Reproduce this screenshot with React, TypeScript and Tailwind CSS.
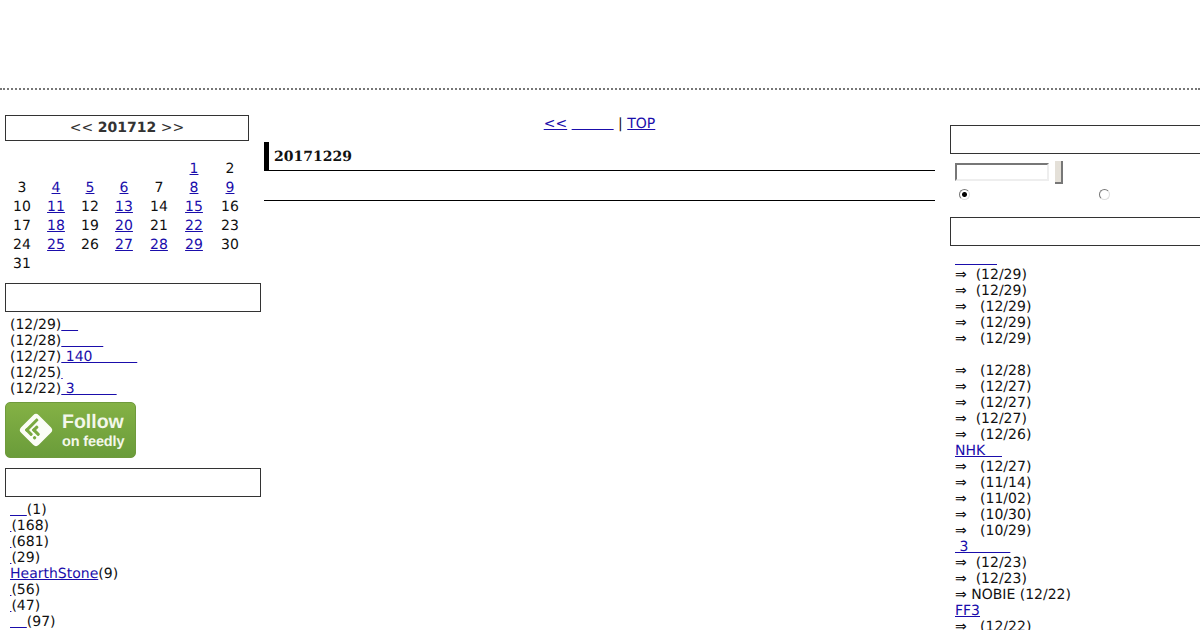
const HAIR = "\u200a";
const EM = "\u2003";
const THIN = "\u2009";
const SP = "\u00a0";

const linkCls = "text-[#1a0dab] underline";

const calendar: { day: number | null; link: boolean }[][] = [
  [null, null, null, null, null, 1, 2],
  [3, 4, 5, 6, 7, 8, 9],
  [10, 11, 12, 13, 14, 15, 16],
  [17, 18, 19, 20, 21, 22, 23],
  [24, 25, 26, 27, 28, 29, 30],
  [31, null, null, null, null, null, null],
].map((row) =>
  row.map((day) => ({
    day,
    link: day !== null && [1, 4, 5, 6, 8, 9, 11, 13, 15, 18, 20, 22, 25, 27, 28, 29].includes(day),
  })),
);

const recent = [
  { date: "(12/29)", title: EM + THIN },
  { date: "(12/28)", title: EM + EM + EM },
  { date: "(12/27)", title: SP + "140" + EM + EM + EM + THIN },
  { date: "(12/25)", title: HAIR },
  { date: "(12/22)", title: SP + "3" + EM + EM + EM },
];

const categories = [
  { name: EM + THIN, count: "(1)" },
  { name: HAIR, count: "(168)" },
  { name: HAIR, count: "(681)" },
  { name: HAIR, count: "(29)" },
  { name: "HearthStone", count: "(9)" },
  { name: HAIR, count: "(56)" },
  { name: HAIR, count: "(47)" },
  { name: EM + THIN, count: "(97)" },
];

type Row = { link?: string; text?: string };
const entry = (spaces: number, date: string): Row => ({
  text: "⇒" + SP.repeat(spaces) + date,
});

const comments: Row[] = [
  { link: EM + EM + EM },
  entry(2, "(12/29)"),
  entry(2, "(12/29)"),
  entry(3, "(12/29)"),
  entry(3, "(12/29)"),
  entry(3, "(12/29)"),
  { text: SP },
  entry(3, "(12/28)"),
  entry(3, "(12/27)"),
  entry(3, "(12/27)"),
  entry(2, "(12/27)"),
  entry(3, "(12/26)"),
  { link: "NHK" + EM + THIN },
  entry(3, "(12/27)"),
  entry(3, "(11/14)"),
  entry(3, "(11/02)"),
  entry(3, "(10/30)"),
  entry(3, "(10/29)"),
  { link: SP + "3" + EM + EM + EM },
  entry(2, "(12/23)"),
  entry(2, "(12/23)"),
  entry(1, "NOBIE (12/22)"),
  { link: "FF3" },
  entry(3, "(12/22)"),
];

const radioCls =
  "m-0 size-[11px] appearance-none rounded-full border border-b-[#ddd] border-l-[#777] border-r-[#ddd] border-t-[#777] bg-white checked:bg-[radial-gradient(circle,#000_2px,#fff_3px)]";

function SideBox({ className = "" }: { className?: string }) {
  return <div className={`h-[29px] border border-[#333] ${className}`} />;
}

function FeedlyBadge() {
  return (
    <a className="flex h-[56px] w-[131px] items-center rounded-[5px] border border-[#6f9a3c] bg-gradient-to-b from-[#84b145] to-[#6a9c3a] pl-[11px]">
      <svg width="38" height="38" viewBox="0 0 38 38" className="shrink-0">
        <rect x="6.5" y="6.5" width="25" height="25" rx="4" transform="rotate(45 19 19)" fill="#fbfdf6" />
        <g transform="rotate(45 19 19)" fill="#7aa940">
          <rect x="11" y="10" width="3" height="17" rx="1" />
          <rect x="11" y="24" width="9" height="3" rx="1" />
          <rect x="16" y="15" width="3" height="7" rx="1" />
          <rect x="16" y="19" width="9" height="3" rx="1" />
          <rect x="22" y="24" width="3" height="3" rx="1" />
        </g>
      </svg>
      <div className="ml-[7px] flex flex-col font-['Liberation_Sans',sans-serif] font-bold text-[#f3f7ea]">
        <span className="text-[19.5px] leading-[23px]">Follow</span>
        <span className="text-[14.5px] leading-[16px] tracking-[-0.15px]">on feedly</span>
      </div>
    </a>
  );
}

export default function App() {
  return (
    <div className="h-[630px] w-[1200px] overflow-hidden bg-white font-['DejaVu_Sans',sans-serif] text-[14px] leading-[16px] text-[#111] [text-rendering:geometricPrecision]">
      <div className="h-[90px] border-b-2 border-dotted border-[#777]" />
      <div className="flex">
        <div className="ml-[5px] mt-[25px] w-[256px] shrink-0">
          <div className="flex h-[26px] w-[244px] items-center justify-center whitespace-pre border border-[#333] text-[#333]">
            {"<< "}
            <b>201712</b>
            {" >>"}
          </div>
          <div className="mt-[18px] grid w-[244px] grid-cols-[34px_34px_34px_34px_36px_34px_38px]">
            {calendar.flat().map((cell, i) => (
              <div key={i} className="flex h-[19px] items-center justify-center">
                {cell.link ? <a className={linkCls}>{cell.day}</a> : cell.day}
              </div>
            ))}
          </div>
          <SideBox className="mt-[10px]" />
          <ul className="mt-[5px] pl-[5px]">
            {recent.map((r) => (
              <li key={r.date} className="whitespace-pre">
                {r.date}
                <a className={linkCls}>{r.title}</a>
              </li>
            ))}
          </ul>
          <div className="mt-[5px]">
            <FeedlyBadge />
          </div>
          <SideBox className="mt-[10px]" />
          <ul className="mt-[5px] pl-[5px]">
            {categories.map((c, i) => (
              <li key={i} className="whitespace-pre">
                <a className={linkCls}>{c.name}</a>
                {c.count}
              </li>
            ))}
          </ul>
        </div>

        <div className="ml-[3px] mt-[26px] w-[671px] shrink-0">
          <div className="whitespace-pre text-center">
            <a className={linkCls}>{"<<"}</a>
            {" "}
            <a className={linkCls}>{EM + EM + EM}</a>
            {" | "}
            <a className={linkCls}>TOP</a>
          </div>
          <h2 className="mt-[10px] flex h-[29px] items-center border-b border-l-[5px] border-black pl-[5px] pt-[2px] font-['DejaVu_Serif',serif] text-[14px] font-bold">
            20171229
          </h2>
          <div className="h-[30px] border-b border-black" />
        </div>

        <div className="ml-[15px] mt-[35px] w-[300px] shrink-0">
          <SideBox />
          <div className="h-[63px]">
            <div className="flex items-start pl-[5px] pt-[7px]">
              <input
                readOnly
                className="mt-[2px] h-[18px] w-[94px] border-2 border-b-[#eee] border-l-[#777] border-r-[#eee] border-t-[#777] bg-white"
              />
              <div className="ml-[6px] h-[23px] w-[8px] border-b-2 border-r-2 border-b-[#777] border-r-[#777] bg-[#e4e0d8]" />
            </div>
            <div className="mt-[5px] flex pl-[9px]">
              <input type="radio" defaultChecked className={radioCls} />
              <input type="radio" className={`${radioCls} ml-[129px]`} />
            </div>
          </div>
          <SideBox />
          <ul className="mt-[5px] pl-[5px]">
            {comments.map((r, i) => (
              <li key={i} className="whitespace-pre">
                {r.link ? <a className={linkCls}>{r.link}</a> : r.text}
              </li>
            ))}
          </ul>
        </div>
      </div>
    </div>
  );
}
